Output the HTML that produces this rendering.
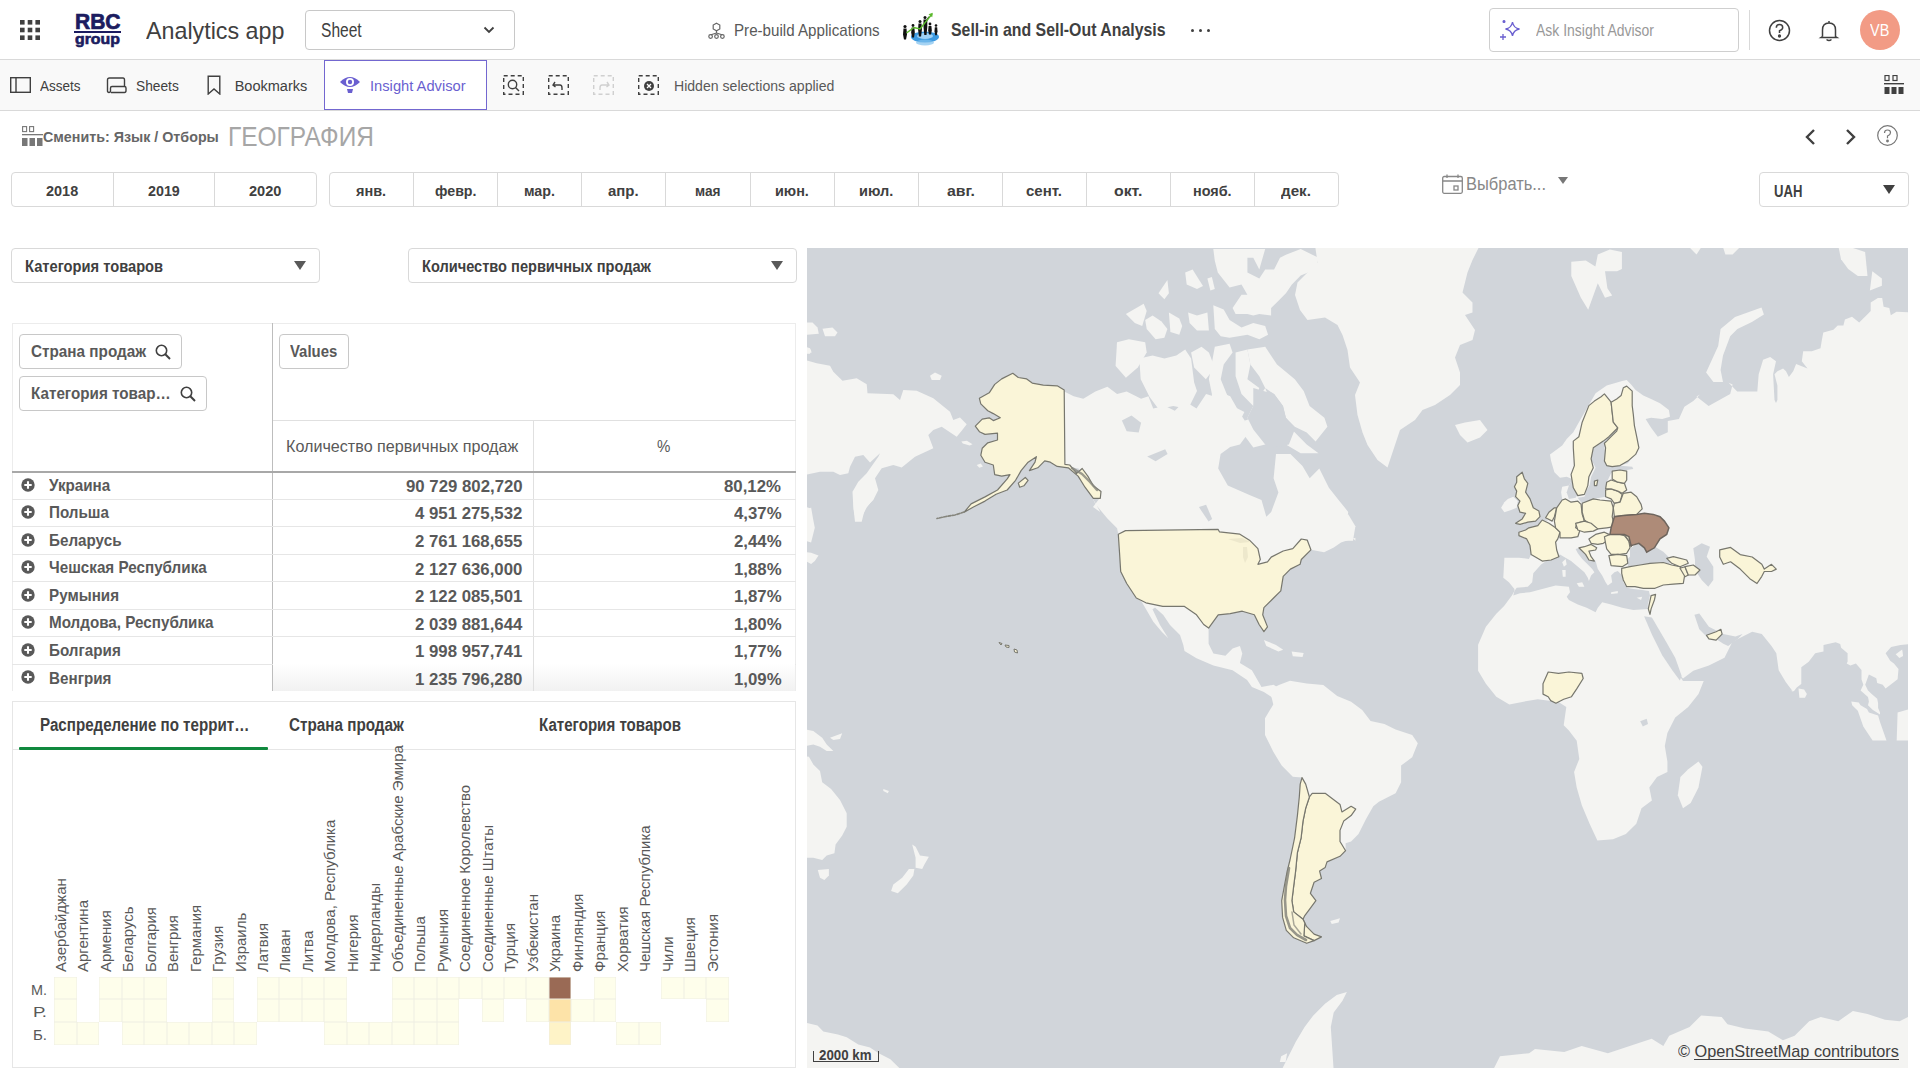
<!DOCTYPE html>
<html><head><meta charset="utf-8">
<style>
*{box-sizing:border-box;margin:0;padding:0}
html,body{width:1920px;height:1080px;overflow:hidden;background:#fff;font-family:"Liberation Sans",sans-serif;color:#404040}
.a{position:absolute;white-space:nowrap;line-height:1}
.b{font-weight:bold}
#hdr{position:absolute;left:0;top:0;width:1920px;height:60px;background:#fff;border-bottom:1px solid #d9d9d9}
#tb{position:absolute;left:0;top:60px;width:1920px;height:51px;background:#f9f9f9;border-bottom:1px solid #d9d9d9}
.box{position:absolute;border:1px solid #d9d9d9;border-radius:4px;background:#fff}
.tri{position:absolute;width:0;height:0;border-left:6px solid transparent;border-right:6px solid transparent;border-top:9px solid #595959}
</style></head><body>
<div id="hdr"></div>
<div id="tb"></div>
<svg class="a" style="left:20px;top:20px" width="20" height="20" viewBox="0 0 20 20" fill="#404040">
<rect x="0" y="0" width="4.6" height="4.6"/><rect x="7.7" y="0" width="4.6" height="4.6"/><rect x="15.4" y="0" width="4.6" height="4.6"/>
<rect x="0" y="7.7" width="4.6" height="4.6"/><rect x="7.7" y="7.7" width="4.6" height="4.6"/><rect x="15.4" y="7.7" width="4.6" height="4.6"/>
<rect x="0" y="15.4" width="4.6" height="4.6"/><rect x="7.7" y="15.4" width="4.6" height="4.6"/><rect x="15.4" y="15.4" width="4.6" height="4.6"/>
</svg>
<div class="a" style="left:75.00px;top:11.04px;font-size:21.80px;font-weight:bold;color:#1c1c60;transform:scaleX(0.9639);transform-origin:0 0;-webkit-text-stroke:0.7px #1c1c60;">RBC</div>
<div class="a" style="left:74px;top:31px;width:47px;height:2.4px;background:#1c1c60"></div>
<div class="a" style="left:75.00px;top:32.04px;font-size:14.24px;font-weight:bold;color:#1c1c60;transform:scaleX(1.1144);transform-origin:0 0;-webkit-text-stroke:0.6px #1c1c60;">group</div>
<div class="a" style="left:145.50px;top:19.48px;font-size:24.71px;color:#404040;transform:scaleX(0.9420);transform-origin:0 0;">Analytics app</div>
<div class="box" style="left:305px;top:10px;width:210px;height:40px;border-color:#c8c8c8"></div>
<div class="a" style="left:321.00px;top:21.11px;font-size:19.48px;color:#404040;transform:scaleX(0.7991);transform-origin:0 0;">Sheet</div>
<svg class="a" style="left:483px;top:26px" width="12" height="8" viewBox="0 0 12 8"><path d="M1.5 1.5 L6 6 L10.5 1.5" stroke="#404040" stroke-width="1.8" fill="none"/></svg>
<svg class="a" style="left:708px;top:22px" width="17" height="17" viewBox="0 0 17 17" fill="none" stroke="#666" stroke-width="1.2">
<path d="M8.5 1.2 L11.8 3.1 L11.8 6.9 L8.5 8.8 L5.2 6.9 L5.2 3.1 Z"/><path d="M8.5 8.8 L8.5 11.5 M8.5 11 L3 12.8 M8.5 11 L14 12.8"/><circle cx="2.6" cy="14.5" r="1.8"/><circle cx="8.5" cy="14.5" r="1.8"/><circle cx="14.4" cy="14.5" r="1.8"/>
</svg>
<div class="a" style="left:734.30px;top:22.20px;font-size:17.01px;color:#595959;transform:scaleX(0.8911);transform-origin:0 0;">Pre-build Applications</div>
<svg class="a" style="left:900px;top:10px" width="42" height="38" viewBox="900 10 42 38">
<ellipse cx="925" cy="37" rx="14" ry="5.5" fill="#3d9ae0"/><ellipse cx="925" cy="36" rx="8" ry="3" fill="#9fd2f7"/><ellipse cx="925" cy="42.5" rx="9" ry="3" fill="#7fc0ee" opacity="0.7"/>
<g fill="#111">
<circle cx="905" cy="26.5" r="1.6"/><path d="M903.5 28.5 h3 l0.5 6 l-1 5 h-2 l-1 -5z"/>
<circle cx="913" cy="25.5" r="1.4"/><path d="M911.6 27.5 h2.8 l0.4 5 l-0.8 5 h-2 l-0.8 -5z"/>
<circle cx="920" cy="21.5" r="1.5"/><path d="M918.5 23.5 h3 l0.4 6 l-0.8 7 h-2.2 l-0.8 -7z"/>
<circle cx="925" cy="17.5" r="1.5"/><path d="M923.5 19.5 h3 l2 -3 l0.8 0.5 l-2 4 l0 6 l-0.8 8 h-2.2 l-0.8 -8z"/>
<circle cx="930" cy="24" r="1.4"/><path d="M928.6 26 h2.8 l0.4 4.5 l-0.8 4 h-2 l-0.8 -4z"/>
<circle cx="936" cy="25.5" r="1.3"/><path d="M934.8 27.3 h2.4 l0.3 4 l-0.7 4 h-1.6 l-0.7 -4z"/>
</g>
<path d="M906.5 33 L914 27.5 L920 29 L932 14" stroke="#5cb82e" stroke-width="1.5" fill="none"/><path d="M928.5 14.2 L932.8 12.8 L932.2 17.2 Z" fill="#5cb82e"/>
</svg>
<div class="a" style="left:951.40px;top:22.01px;font-size:17.59px;font-weight:bold;color:#404040;transform:scaleX(0.9025);transform-origin:0 0;">Sell-in and Sell-Out Analysis</div>
<div class="a" style="left:1190.8px;top:28.6px;width:3px;height:3px;background:#404040;border-radius:2px"></div>
<div class="a" style="left:1198.8px;top:28.6px;width:3px;height:3px;background:#404040;border-radius:2px"></div>
<div class="a" style="left:1206.8px;top:28.6px;width:3px;height:3px;background:#404040;border-radius:2px"></div>
<div class="box" style="left:1489px;top:8px;width:250px;height:44px;border-color:#cfcfcf"></div>
<svg class="a" style="left:1499px;top:19px" width="24" height="22" viewBox="0 0 24 22" fill="none" stroke="#6a5fd0" stroke-width="1.3">
<path d="M13.5 3 Q14.5 9 20.5 10 Q14.5 11 13.5 17 Q12.5 11 6.5 10 Q12.5 9 13.5 3 Z"/><path d="M4 15 L4 21 M1 18 L7 18"/><circle cx="5" cy="2.5" r="0.9" fill="#6a5fd0"/>
</svg>
<div class="a" style="left:1536.00px;top:23.37px;font-size:15.99px;color:#999999;transform:scaleX(0.8734);transform-origin:0 0;">Ask Insight Advisor</div>
<div class="a" style="left:1749px;top:10px;width:1px;height:40px;background:#d9d9d9"></div>
<svg class="a" style="left:1768px;top:19px" width="23" height="23" viewBox="0 0 23 23" fill="none" stroke="#404040" stroke-width="1.5">
<circle cx="11.5" cy="11.5" r="10"/><path d="M8.3 8.7 Q8.3 5.6 11.5 5.6 Q14.7 5.6 14.7 8.5 Q14.7 10.5 11.5 11.8 L11.5 14"/><circle cx="11.5" cy="17" r="0.9" fill="#404040"/>
</svg>
<svg class="a" style="left:1818px;top:19px" width="22" height="23" viewBox="0 0 22 23" fill="none" stroke="#404040" stroke-width="1.5">
<path d="M11 2 L11 3.5 M4.5 17.5 L4.5 11 Q4.5 4 11 4 Q17.5 4 17.5 11 L17.5 17.5 L19 18.5 L3 18.5 L4.5 17.5 M8.5 20.5 Q11 22.5 13.5 20.5"/>
</svg>
<div class="a" style="left:1860px;top:10px;width:40px;height:40px;border-radius:20px;background:#f29b85"></div>
<div class="a" style="left:1870.00px;top:22.30px;font-size:16.42px;color:#ffffff;transform:scaleX(0.8802);transform-origin:0 0;">VB</div>
<svg class="a" style="left:10px;top:77px" width="21" height="16" viewBox="0 0 21 16" fill="none" stroke="#404040" stroke-width="1.4"><rect x="0.7" y="0.7" width="19.6" height="14.6"/><path d="M6 0.7 L6 15.3"/></svg>
<div class="a" style="left:40.00px;top:78.60px;font-size:14.53px;color:#404040;transform:scaleX(0.9288);transform-origin:0 0;">Assets</div>
<svg class="a" style="left:106px;top:77px" width="21" height="17" viewBox="0 0 21 17" fill="none" stroke="#404040" stroke-width="1.4"><path d="M1.5 14 L1.5 3 Q1.5 1 3.5 1 L17 1 Q18.5 1 18.5 3 L18.5 9"/><path d="M5 15.5 L18.5 15.5 Q20 15.5 20 13.5 L20 11 Q20 9.5 18.5 9.5 L6 9.5 Q4.5 9.5 4.5 11 L4.5 14 Q4.5 15.5 3 15.5 Q1.5 15.5 1.5 14"/></svg>
<div class="a" style="left:136.30px;top:78.60px;font-size:14.53px;color:#404040;transform:scaleX(0.9475);transform-origin:0 0;">Sheets</div>
<svg class="a" style="left:207px;top:75px" width="14" height="20" viewBox="0 0 14 20" fill="none" stroke="#404040" stroke-width="1.4"><path d="M1.2 19 L1.2 1.2 L12.8 1.2 L12.8 19 L7 14 Z"/></svg>
<div class="a" style="left:234.70px;top:78.60px;font-size:14.53px;color:#404040;">Bookmarks</div>
<div class="a" style="left:324px;top:60px;width:163px;height:50px;border:1.6px solid #7367d0;background:#fff"></div>
<svg class="a" style="left:339px;top:74px" width="22" height="22" viewBox="0 0 22 22"><path d="M1 8 Q11 -2 21 8 Q11 18 1 8 Z" fill="#6a5fd0"/><circle cx="11" cy="8" r="4" fill="#fff"/><circle cx="11" cy="8" r="2.2" fill="#6a5fd0"/><path d="M8 15 L14 15 L13 19 L9 19 Z" fill="#6a5fd0"/></svg>
<div class="a" style="left:370.00px;top:78.18px;font-size:15.26px;color:#6a5fd0;transform:scaleX(0.9640);transform-origin:0 0;">Insight Advisor</div>
<svg class="a" style="left:503px;top:75px" width="21" height="20" viewBox="0 0 21 20" fill="none" stroke="#404040" stroke-width="1.4"><rect x="0.7" y="0.7" width="19.6" height="18.6" stroke-dasharray="4 3"/><circle cx="9.5" cy="9.5" r="4.2"/><path d="M12.5 12.5 L16 16"/></svg>
<svg class="a" style="left:548px;top:75px" width="21" height="20" viewBox="0 0 21 20" fill="none" stroke="#404040" stroke-width="1.4"><rect x="0.7" y="0.7" width="19.6" height="18.6" stroke-dasharray="4 3"/><path d="M7 7 L5 10 L7.5 12 M5 10 L12 10 Q14 10 14 13 L14 15"/></svg>
<svg class="a" style="left:593px;top:75px" width="21" height="20" viewBox="0 0 21 20" fill="none" stroke="#d0d0d0" stroke-width="1.4"><rect x="0.7" y="0.7" width="19.6" height="18.6" stroke-dasharray="4 3"/><path d="M14 7 L16 10 L13.5 12 M16 10 L9 10 Q7 10 7 13 L7 15"/></svg>
<svg class="a" style="left:638px;top:75px" width="21" height="20" viewBox="0 0 21 20" fill="none" stroke="#404040" stroke-width="1.4"><rect x="0.7" y="0.7" width="19.6" height="18.6" stroke-dasharray="4 3"/><circle cx="11" cy="11" r="5" fill="#404040" stroke="none"/><path d="M9 9 L13 13 M13 9 L9 13" stroke="#fff" stroke-width="1.3"/></svg>
<div class="a" style="left:673.50px;top:78.18px;font-size:15.26px;color:#595959;transform:scaleX(0.9229);transform-origin:0 0;">Hidden selections applied</div>
<svg class="a" style="left:1884px;top:75px" width="22" height="21" viewBox="0 0 22 21" fill="#404040"><rect x="1" y="0.5" width="4" height="5" fill="none" stroke="#404040" stroke-width="1.2"/><rect x="9" y="0.5" width="4" height="5" fill="none" stroke="#404040" stroke-width="1.2"/><rect x="0" y="8" width="20" height="1.4"/><rect x="0.5" y="12" width="5" height="7"/><rect x="7.5" y="12" width="5" height="7"/><rect x="14.5" y="12" width="5" height="7"/></svg>
<svg class="a" style="left:22px;top:126px" width="21" height="20" viewBox="0 0 21 20" fill="#777"><rect x="0.6" y="0.6" width="4" height="5" fill="none" stroke="#777" stroke-width="1.1"/><rect x="7.6" y="0.6" width="4" height="5" fill="none" stroke="#777" stroke-width="1.1"/><rect x="0" y="8" width="21" height="1.3"/><rect x="0" y="12" width="5.5" height="8"/><rect x="7.5" y="12" width="5.5" height="8"/><rect x="15" y="12" width="5.5" height="8"/></svg>
<div class="a" style="left:43.00px;top:130.30px;font-size:14.53px;font-weight:bold;color:#666666;transform:scaleX(0.9833);transform-origin:0 0;">Сменить: Язык / Отборы</div>
<div class="a" style="left:228.00px;top:123.96px;font-size:26.74px;color:#a6a6a6;transform:scaleX(0.9152);transform-origin:0 0;">ГЕОГРАФИЯ</div>
<svg class="a" style="left:1803px;top:128px" width="60" height="18" viewBox="0 0 60 18" fill="none" stroke="#404040" stroke-width="2.4"><path d="M11 2 L4 9 L11 16"/><path d="M44 2 L51 9 L44 16"/></svg>
<svg class="a" style="left:1876px;top:124px" width="23" height="23" viewBox="0 0 23 23" fill="none" stroke="#777" stroke-width="1.2"><circle cx="11.5" cy="11.5" r="9.8"/><path d="M8.5 9 Q8.5 6 11.5 6 Q14.5 6 14.5 8.7 Q14.5 10.6 11.5 12 L11.5 14.3"/><circle cx="11.5" cy="17" r="0.8" fill="#777"/></svg>
<div class="box" style="left:11px;top:172px;width:306px;height:35px"></div>
<div class="a" style="left:45.70px;top:184.47px;font-size:14.68px;font-weight:bold;color:#404040;transform:scaleX(0.9858);transform-origin:0 0;">2018</div>
<div class="a" style="left:112.7px;top:173px;width:1px;height:33px;background:#d9d9d9"></div>
<div class="a" style="left:147.90px;top:184.47px;font-size:14.68px;font-weight:bold;color:#404040;transform:scaleX(0.9736);transform-origin:0 0;">2019</div>
<div class="a" style="left:214.4px;top:173px;width:1px;height:33px;background:#d9d9d9"></div>
<div class="a" style="left:249.20px;top:184.47px;font-size:14.68px;font-weight:bold;color:#404040;transform:scaleX(0.9919);transform-origin:0 0;">2020</div>
<div class="box" style="left:329px;top:172px;width:1010px;height:35px"></div>
<div class="a" style="left:356.27px;top:184.06px;font-size:14.70px;font-weight:bold;color:#404040;transform:scaleX(0.9853);transform-origin:0 0;">янв.</div>
<div class="a" style="left:413.1px;top:173px;width:1px;height:33px;background:#d9d9d9"></div>
<div class="a" style="left:434.60px;top:184.06px;font-size:14.70px;font-weight:bold;color:#404040;transform:scaleX(0.9668);transform-origin:0 0;">февр.</div>
<div class="a" style="left:497.2px;top:173px;width:1px;height:33px;background:#d9d9d9"></div>
<div class="a" style="left:523.90px;top:184.06px;font-size:14.70px;font-weight:bold;color:#404040;transform:scaleX(0.9718);transform-origin:0 0;">мар.</div>
<div class="a" style="left:581.3px;top:173px;width:1px;height:33px;background:#d9d9d9"></div>
<div class="a" style="left:608.00px;top:184.06px;font-size:14.70px;font-weight:bold;color:#404040;transform:scaleX(1.0187);transform-origin:0 0;">апр.</div>
<div class="a" style="left:665.4px;top:173px;width:1px;height:33px;background:#d9d9d9"></div>
<div class="a" style="left:694.70px;top:184.06px;font-size:14.70px;font-weight:bold;color:#404040;transform:scaleX(0.9300);transform-origin:0 0;">мая</div>
<div class="a" style="left:749.5px;top:173px;width:1px;height:33px;background:#d9d9d9"></div>
<div class="a" style="left:774.70px;top:184.06px;font-size:14.70px;font-weight:bold;color:#404040;transform:scaleX(0.9813);transform-origin:0 0;">июн.</div>
<div class="a" style="left:833.6px;top:173px;width:1px;height:33px;background:#d9d9d9"></div>
<div class="a" style="left:858.60px;top:184.06px;font-size:14.70px;font-weight:bold;color:#404040;transform:scaleX(0.9879);transform-origin:0 0;">июл.</div>
<div class="a" style="left:917.7px;top:173px;width:1px;height:33px;background:#d9d9d9"></div>
<div class="a" style="left:947.20px;top:184.06px;font-size:14.70px;font-weight:bold;color:#404040;transform:scaleX(1.0792);transform-origin:0 0;">авг.</div>
<div class="a" style="left:1001.8px;top:173px;width:1px;height:33px;background:#d9d9d9"></div>
<div class="a" style="left:1025.60px;top:184.06px;font-size:14.70px;font-weight:bold;color:#404040;transform:scaleX(1.0225);transform-origin:0 0;">сент.</div>
<div class="a" style="left:1085.9px;top:173px;width:1px;height:33px;background:#d9d9d9"></div>
<div class="a" style="left:1113.80px;top:184.06px;font-size:14.70px;font-weight:bold;color:#404040;transform:scaleX(1.0793);transform-origin:0 0;">окт.</div>
<div class="a" style="left:1170.0px;top:173px;width:1px;height:33px;background:#d9d9d9"></div>
<div class="a" style="left:1192.90px;top:184.06px;font-size:14.70px;font-weight:bold;color:#404040;transform:scaleX(0.9798);transform-origin:0 0;">нояб.</div>
<div class="a" style="left:1254.1px;top:173px;width:1px;height:33px;background:#d9d9d9"></div>
<div class="a" style="left:1280.70px;top:184.06px;font-size:14.70px;font-weight:bold;color:#404040;transform:scaleX(1.0325);transform-origin:0 0;">дек.</div>
<svg class="a" style="left:1442px;top:174px" width="21" height="20" viewBox="0 0 21 20" fill="none" stroke="#888" stroke-width="1.3"><rect x="0.7" y="2.5" width="19.6" height="16.8" rx="1.5"/><path d="M0.7 7 L20.3 7 M5 0.5 L5 4 M16 0.5 L16 4"/><rect x="12" y="12" width="4" height="4"/></svg>
<div class="a" style="left:1466.00px;top:174.71px;font-size:18.90px;color:#888888;transform:scaleX(0.8712);transform-origin:0 0;">Выбрать...</div>
<div class="tri" style="left:1558px;top:177px;border-top-color:#777;border-left-width:5.5px;border-right-width:5.5px;border-top-width:7px"></div>
<div class="box" style="left:1759px;top:172px;width:150px;height:35px"></div>
<div class="a" style="left:1773.80px;top:183.24px;font-size:16.13px;font-weight:bold;color:#404040;transform:scaleX(0.8131);transform-origin:0 0;">UAH</div>
<div class="tri" style="left:1883px;top:185px;border-top-color:#404040"></div>
<div class="box" style="left:11px;top:248px;width:309px;height:35px"></div>
<div class="a" style="left:24.80px;top:258.69px;font-size:15.84px;font-weight:bold;color:#404040;transform:scaleX(0.9275);transform-origin:0 0;">Категория товаров</div>
<div class="tri" style="left:294px;top:261px"></div>
<div class="box" style="left:408px;top:248px;width:389px;height:35px"></div>
<div class="a" style="left:422.20px;top:258.69px;font-size:15.84px;font-weight:bold;color:#404040;transform:scaleX(0.9216);transform-origin:0 0;">Количество первичных продаж</div>
<div class="tri" style="left:771px;top:261px"></div>
<div class="a" style="left:12px;top:323px;width:784px;height:368px;border-top:1px solid #ececec;border-left:1px solid #ececec;border-right:1px solid #ececec"></div>
<div class="a" style="left:272px;top:323px;width:1px;height:368px;background:#bdbdbd"></div>
<div class="a" style="left:273px;top:420px;width:523px;height:1px;background:#e0e0e0"></div>
<div class="a" style="left:533px;top:420px;width:1px;height:271px;background:#e0e0e0"></div>
<div class="a" style="left:12px;top:471px;width:784px;height:2px;background:#a8a8a8"></div>
<svg style="position:absolute;left:0;top:0" width="0" height="0"><defs><symbol id="srch" viewBox="0 0 16 16"><circle cx="6.5" cy="6.5" r="5.2" fill="none" stroke="#404040" stroke-width="1.6"/><path d="M10.3 10.3 L15 15" stroke="#404040" stroke-width="2"/></symbol>
<symbol id="plus" viewBox="0 0 14 14"><circle cx="7" cy="7" r="6.7" fill="#595959"/><path d="M3.3 7 L10.7 7 M7 3.3 L7 10.7" stroke="#fff" stroke-width="2.1"/></symbol></defs></svg>
<div class="box" style="left:19px;top:334px;width:163px;height:35px;border-color:#c8c8c8"></div>
<div class="a" style="left:30.60px;top:343.97px;font-size:15.99px;font-weight:bold;color:#595959;transform:scaleX(0.9564);transform-origin:0 0;">Страна продаж</div>
<svg class="a" style="left:155px;top:344px" width="16" height="16"><use href="#srch"/></svg>
<div class="box" style="left:19px;top:376px;width:188px;height:35px;border-color:#c8c8c8"></div>
<div class="a" style="left:30.60px;top:385.97px;font-size:15.99px;font-weight:bold;color:#595959;transform:scaleX(0.9518);transform-origin:0 0;">Категория товар…</div>
<svg class="a" style="left:180px;top:386px" width="16" height="16"><use href="#srch"/></svg>
<div class="box" style="left:279px;top:334px;width:70px;height:35px;border-color:#c8c8c8"></div>
<div class="a" style="left:290.20px;top:343.87px;font-size:16.57px;font-weight:bold;color:#595959;transform:scaleX(0.9005);transform-origin:0 0;">Values</div>
<div class="a" style="left:286.00px;top:438.75px;font-size:16.72px;color:#595959;transform:scaleX(0.9656);transform-origin:0 0;">Количество первичных продаж</div>
<div class="a" style="left:657.31px;top:438.75px;font-size:16.72px;color:#595959;transform:scaleX(0.9000);transform-origin:0 0;">%</div>
<svg class="a" style="left:20.5px;top:477.5px" width="14" height="14"><use href="#plus"/></svg>
<div class="a" style="left:48.60px;top:476.70px;font-size:17.01px;font-weight:bold;color:#595959;transform:scaleX(0.8948);transform-origin:0 0;">Украина</div>
<div class="a" style="left:406.00px;top:477.94px;font-size:16.13px;font-weight:bold;color:#595959;transform:scaleX(1.0417);transform-origin:0 0;">90 729 802,720</div>
<div class="a" style="left:724.23px;top:477.94px;font-size:16.13px;font-weight:bold;color:#595959;transform:scaleX(1.0417);transform-origin:0 0;">80,12%</div>
<div class="a" style="left:12px;top:498.6px;width:784px;height:1px;background:#e6e6e6"></div>
<svg class="a" style="left:20.5px;top:505.1px" width="14" height="14"><use href="#plus"/></svg>
<div class="a" style="left:48.60px;top:504.25px;font-size:17.01px;font-weight:bold;color:#595959;transform:scaleX(0.8948);transform-origin:0 0;">Польша</div>
<div class="a" style="left:415.33px;top:505.49px;font-size:16.13px;font-weight:bold;color:#595959;transform:scaleX(1.0417);transform-origin:0 0;">4 951 275,532</div>
<div class="a" style="left:733.56px;top:505.49px;font-size:16.13px;font-weight:bold;color:#595959;transform:scaleX(1.0417);transform-origin:0 0;">4,37%</div>
<div class="a" style="left:12px;top:526.1px;width:784px;height:1px;background:#e6e6e6"></div>
<svg class="a" style="left:20.5px;top:532.6px" width="14" height="14"><use href="#plus"/></svg>
<div class="a" style="left:48.60px;top:531.80px;font-size:17.01px;font-weight:bold;color:#595959;transform:scaleX(0.8948);transform-origin:0 0;">Беларусь</div>
<div class="a" style="left:415.33px;top:533.04px;font-size:16.13px;font-weight:bold;color:#595959;transform:scaleX(1.0417);transform-origin:0 0;">2 761 168,655</div>
<div class="a" style="left:733.56px;top:533.04px;font-size:16.13px;font-weight:bold;color:#595959;transform:scaleX(1.0417);transform-origin:0 0;">2,44%</div>
<div class="a" style="left:12px;top:553.6px;width:784px;height:1px;background:#e6e6e6"></div>
<svg class="a" style="left:20.5px;top:560.1px" width="14" height="14"><use href="#plus"/></svg>
<div class="a" style="left:48.60px;top:559.35px;font-size:17.01px;font-weight:bold;color:#595959;transform:scaleX(0.8948);transform-origin:0 0;">Чешская Республика</div>
<div class="a" style="left:415.33px;top:560.59px;font-size:16.13px;font-weight:bold;color:#595959;transform:scaleX(1.0417);transform-origin:0 0;">2 127 636,000</div>
<div class="a" style="left:733.56px;top:560.59px;font-size:16.13px;font-weight:bold;color:#595959;transform:scaleX(1.0417);transform-origin:0 0;">1,88%</div>
<div class="a" style="left:12px;top:581.2px;width:784px;height:1px;background:#e6e6e6"></div>
<svg class="a" style="left:20.5px;top:587.7px" width="14" height="14"><use href="#plus"/></svg>
<div class="a" style="left:48.60px;top:586.90px;font-size:17.01px;font-weight:bold;color:#595959;transform:scaleX(0.8948);transform-origin:0 0;">Румыния</div>
<div class="a" style="left:415.33px;top:588.14px;font-size:16.13px;font-weight:bold;color:#595959;transform:scaleX(1.0417);transform-origin:0 0;">2 122 085,501</div>
<div class="a" style="left:733.56px;top:588.14px;font-size:16.13px;font-weight:bold;color:#595959;transform:scaleX(1.0417);transform-origin:0 0;">1,87%</div>
<div class="a" style="left:12px;top:608.8px;width:784px;height:1px;background:#e6e6e6"></div>
<svg class="a" style="left:20.5px;top:615.2px" width="14" height="14"><use href="#plus"/></svg>
<div class="a" style="left:48.60px;top:614.45px;font-size:17.01px;font-weight:bold;color:#595959;transform:scaleX(0.8948);transform-origin:0 0;">Молдова, Республика</div>
<div class="a" style="left:415.33px;top:615.69px;font-size:16.13px;font-weight:bold;color:#595959;transform:scaleX(1.0417);transform-origin:0 0;">2 039 881,644</div>
<div class="a" style="left:733.56px;top:615.69px;font-size:16.13px;font-weight:bold;color:#595959;transform:scaleX(1.0417);transform-origin:0 0;">1,80%</div>
<div class="a" style="left:12px;top:636.3px;width:784px;height:1px;background:#e6e6e6"></div>
<svg class="a" style="left:20.5px;top:642.8px" width="14" height="14"><use href="#plus"/></svg>
<div class="a" style="left:48.60px;top:642.00px;font-size:17.01px;font-weight:bold;color:#595959;transform:scaleX(0.8948);transform-origin:0 0;">Болгария</div>
<div class="a" style="left:415.33px;top:643.24px;font-size:16.13px;font-weight:bold;color:#595959;transform:scaleX(1.0417);transform-origin:0 0;">1 998 957,741</div>
<div class="a" style="left:733.56px;top:643.24px;font-size:16.13px;font-weight:bold;color:#595959;transform:scaleX(1.0417);transform-origin:0 0;">1,77%</div>
<div class="a" style="left:12px;top:663.9px;width:784px;height:1px;background:#e6e6e6"></div>
<div class="a" style="left:273px;top:664px;width:522px;height:27px;background:linear-gradient(#fff,#f1f1f1)"></div>
<div class="a" style="left:533px;top:664px;width:1px;height:27px;background:#e0e0e0"></div>
<svg class="a" style="left:20.5px;top:670.4px" width="14" height="14"><use href="#plus"/></svg>
<div class="a" style="left:48.60px;top:669.55px;font-size:17.01px;font-weight:bold;color:#595959;transform:scaleX(0.8948);transform-origin:0 0;">Венгрия</div>
<div class="a" style="left:415.33px;top:670.79px;font-size:16.13px;font-weight:bold;color:#595959;transform:scaleX(1.0417);transform-origin:0 0;">1 235 796,280</div>
<div class="a" style="left:733.56px;top:670.79px;font-size:16.13px;font-weight:bold;color:#595959;transform:scaleX(1.0417);transform-origin:0 0;">1,09%</div>
<div class="a" style="left:12px;top:701px;width:784px;height:367px;border:1px solid #e6e6e6"></div>
<div class="a" style="left:13px;top:749px;width:782px;height:1px;background:#e6e6e6"></div>
<div class="a" style="left:18.5px;top:746.5px;width:249px;height:3px;background:#10893e;border-radius:1px"></div>
<div class="a" style="left:39.60px;top:717.39px;font-size:17.44px;font-weight:bold;color:#404040;transform:scaleX(0.8684);transform-origin:0 0;">Распределение по террит…</div>
<div class="a" style="left:289.00px;top:717.39px;font-size:17.44px;font-weight:bold;color:#404040;transform:scaleX(0.8744);transform-origin:0 0;">Страна продаж</div>
<div class="a" style="left:539.00px;top:717.39px;font-size:17.44px;font-weight:bold;color:#404040;transform:scaleX(0.8656);transform-origin:0 0;">Категория товаров</div>
<div class="a" style="left:31.00px;top:982.18px;font-size:15.26px;color:#595959;transform:scaleX(0.9445);transform-origin:0 0;">М.</div>
<div class="a" style="left:54.40px;top:976.50px;width:22.48px;height:22.90px;background:#fefeeb;box-shadow:inset 0 0 0 0.5px #eeeee4"></div>
<div class="a" style="left:99.36px;top:976.50px;width:22.48px;height:22.90px;background:#fefeeb;box-shadow:inset 0 0 0 0.5px #eeeee4"></div>
<div class="a" style="left:121.84px;top:976.50px;width:22.48px;height:22.90px;background:#fefeeb;box-shadow:inset 0 0 0 0.5px #eeeee4"></div>
<div class="a" style="left:144.32px;top:976.50px;width:22.48px;height:22.90px;background:#fefeeb;box-shadow:inset 0 0 0 0.5px #eeeee4"></div>
<div class="a" style="left:211.76px;top:976.50px;width:22.48px;height:22.90px;background:#fefeeb;box-shadow:inset 0 0 0 0.5px #eeeee4"></div>
<div class="a" style="left:256.72px;top:976.50px;width:22.48px;height:22.90px;background:#fefeeb;box-shadow:inset 0 0 0 0.5px #eeeee4"></div>
<div class="a" style="left:279.20px;top:976.50px;width:22.48px;height:22.90px;background:#fefeeb;box-shadow:inset 0 0 0 0.5px #eeeee4"></div>
<div class="a" style="left:301.68px;top:976.50px;width:22.48px;height:22.90px;background:#fefeeb;box-shadow:inset 0 0 0 0.5px #eeeee4"></div>
<div class="a" style="left:324.16px;top:976.50px;width:22.48px;height:22.90px;background:#fefeeb;box-shadow:inset 0 0 0 0.5px #eeeee4"></div>
<div class="a" style="left:391.60px;top:976.50px;width:22.48px;height:22.90px;background:#fefeeb;box-shadow:inset 0 0 0 0.5px #eeeee4"></div>
<div class="a" style="left:414.08px;top:976.50px;width:22.48px;height:22.90px;background:#fefeeb;box-shadow:inset 0 0 0 0.5px #eeeee4"></div>
<div class="a" style="left:436.56px;top:976.50px;width:22.48px;height:22.90px;background:#fefeeb;box-shadow:inset 0 0 0 0.5px #eeeee4"></div>
<div class="a" style="left:459.04px;top:976.50px;width:22.48px;height:22.90px;background:#fefeeb;box-shadow:inset 0 0 0 0.5px #eeeee4"></div>
<div class="a" style="left:481.52px;top:976.50px;width:22.48px;height:22.90px;background:#fefeeb;box-shadow:inset 0 0 0 0.5px #eeeee4"></div>
<div class="a" style="left:504.00px;top:976.50px;width:22.48px;height:22.90px;background:#fefeeb;box-shadow:inset 0 0 0 0.5px #eeeee4"></div>
<div class="a" style="left:526.48px;top:976.50px;width:22.48px;height:22.90px;background:#fefeeb;box-shadow:inset 0 0 0 0.5px #eeeee4"></div>
<div class="a" style="left:548.96px;top:976.50px;width:22.48px;height:22.90px;background:#9a6a55;box-shadow:inset 0 0 0 0.5px #eeeee4"></div>
<div class="a" style="left:593.92px;top:976.50px;width:22.48px;height:22.90px;background:#fefeeb;box-shadow:inset 0 0 0 0.5px #eeeee4"></div>
<div class="a" style="left:661.36px;top:976.50px;width:22.48px;height:22.90px;background:#fefeeb;box-shadow:inset 0 0 0 0.5px #eeeee4"></div>
<div class="a" style="left:683.84px;top:976.50px;width:22.48px;height:22.90px;background:#fefeeb;box-shadow:inset 0 0 0 0.5px #eeeee4"></div>
<div class="a" style="left:706.32px;top:976.50px;width:22.48px;height:22.90px;background:#fefeeb;box-shadow:inset 0 0 0 0.5px #eeeee4"></div>
<div class="a" style="left:33.00px;top:1003.98px;font-size:15.26px;color:#595959;transform:scaleX(1.2150);transform-origin:0 0;">Р.</div>
<div class="a" style="left:54.40px;top:999.40px;width:22.48px;height:22.30px;background:#fefeeb;box-shadow:inset 0 0 0 0.5px #eeeee4"></div>
<div class="a" style="left:99.36px;top:999.40px;width:22.48px;height:22.30px;background:#fefeeb;box-shadow:inset 0 0 0 0.5px #eeeee4"></div>
<div class="a" style="left:121.84px;top:999.40px;width:22.48px;height:22.30px;background:#fefeeb;box-shadow:inset 0 0 0 0.5px #eeeee4"></div>
<div class="a" style="left:144.32px;top:999.40px;width:22.48px;height:22.30px;background:#fefeeb;box-shadow:inset 0 0 0 0.5px #eeeee4"></div>
<div class="a" style="left:211.76px;top:999.40px;width:22.48px;height:22.30px;background:#fefeeb;box-shadow:inset 0 0 0 0.5px #eeeee4"></div>
<div class="a" style="left:256.72px;top:999.40px;width:22.48px;height:22.30px;background:#fefeeb;box-shadow:inset 0 0 0 0.5px #eeeee4"></div>
<div class="a" style="left:279.20px;top:999.40px;width:22.48px;height:22.30px;background:#fefeeb;box-shadow:inset 0 0 0 0.5px #eeeee4"></div>
<div class="a" style="left:301.68px;top:999.40px;width:22.48px;height:22.30px;background:#fefeeb;box-shadow:inset 0 0 0 0.5px #eeeee4"></div>
<div class="a" style="left:324.16px;top:999.40px;width:22.48px;height:22.30px;background:#fefeeb;box-shadow:inset 0 0 0 0.5px #eeeee4"></div>
<div class="a" style="left:391.60px;top:999.40px;width:22.48px;height:22.30px;background:#fefeeb;box-shadow:inset 0 0 0 0.5px #eeeee4"></div>
<div class="a" style="left:414.08px;top:999.40px;width:22.48px;height:22.30px;background:#fefeeb;box-shadow:inset 0 0 0 0.5px #eeeee4"></div>
<div class="a" style="left:436.56px;top:999.40px;width:22.48px;height:22.30px;background:#fefeeb;box-shadow:inset 0 0 0 0.5px #eeeee4"></div>
<div class="a" style="left:481.52px;top:999.40px;width:22.48px;height:22.30px;background:#fefeeb;box-shadow:inset 0 0 0 0.5px #eeeee4"></div>
<div class="a" style="left:526.48px;top:999.40px;width:22.48px;height:22.30px;background:#fefeeb;box-shadow:inset 0 0 0 0.5px #eeeee4"></div>
<div class="a" style="left:548.96px;top:999.40px;width:22.48px;height:22.30px;background:#fde3a8;box-shadow:inset 0 0 0 0.5px #eeeee4"></div>
<div class="a" style="left:571.44px;top:999.40px;width:22.48px;height:22.30px;background:#fefeeb;box-shadow:inset 0 0 0 0.5px #eeeee4"></div>
<div class="a" style="left:593.92px;top:999.40px;width:22.48px;height:22.30px;background:#fefeeb;box-shadow:inset 0 0 0 0.5px #eeeee4"></div>
<div class="a" style="left:706.32px;top:999.40px;width:22.48px;height:22.30px;background:#fefeeb;box-shadow:inset 0 0 0 0.5px #eeeee4"></div>
<div class="a" style="left:33.00px;top:1026.98px;font-size:15.26px;color:#595959;transform:scaleX(0.9811);transform-origin:0 0;">Б.</div>
<div class="a" style="left:54.40px;top:1021.70px;width:22.48px;height:22.90px;background:#fefeeb;box-shadow:inset 0 0 0 0.5px #eeeee4"></div>
<div class="a" style="left:76.88px;top:1021.70px;width:22.48px;height:22.90px;background:#fefeeb;box-shadow:inset 0 0 0 0.5px #eeeee4"></div>
<div class="a" style="left:121.84px;top:1021.70px;width:22.48px;height:22.90px;background:#fefeeb;box-shadow:inset 0 0 0 0.5px #eeeee4"></div>
<div class="a" style="left:144.32px;top:1021.70px;width:22.48px;height:22.90px;background:#fefeeb;box-shadow:inset 0 0 0 0.5px #eeeee4"></div>
<div class="a" style="left:166.80px;top:1021.70px;width:22.48px;height:22.90px;background:#fefeeb;box-shadow:inset 0 0 0 0.5px #eeeee4"></div>
<div class="a" style="left:189.28px;top:1021.70px;width:22.48px;height:22.90px;background:#fefeeb;box-shadow:inset 0 0 0 0.5px #eeeee4"></div>
<div class="a" style="left:211.76px;top:1021.70px;width:22.48px;height:22.90px;background:#fefeeb;box-shadow:inset 0 0 0 0.5px #eeeee4"></div>
<div class="a" style="left:234.24px;top:1021.70px;width:22.48px;height:22.90px;background:#fefeeb;box-shadow:inset 0 0 0 0.5px #eeeee4"></div>
<div class="a" style="left:324.16px;top:1021.70px;width:22.48px;height:22.90px;background:#fefeeb;box-shadow:inset 0 0 0 0.5px #eeeee4"></div>
<div class="a" style="left:346.64px;top:1021.70px;width:22.48px;height:22.90px;background:#fefeeb;box-shadow:inset 0 0 0 0.5px #eeeee4"></div>
<div class="a" style="left:369.12px;top:1021.70px;width:22.48px;height:22.90px;background:#fefeeb;box-shadow:inset 0 0 0 0.5px #eeeee4"></div>
<div class="a" style="left:391.60px;top:1021.70px;width:22.48px;height:22.90px;background:#fefeeb;box-shadow:inset 0 0 0 0.5px #eeeee4"></div>
<div class="a" style="left:414.08px;top:1021.70px;width:22.48px;height:22.90px;background:#fefeeb;box-shadow:inset 0 0 0 0.5px #eeeee4"></div>
<div class="a" style="left:436.56px;top:1021.70px;width:22.48px;height:22.90px;background:#fefeeb;box-shadow:inset 0 0 0 0.5px #eeeee4"></div>
<div class="a" style="left:548.96px;top:1021.70px;width:22.48px;height:22.90px;background:#fef3c7;box-shadow:inset 0 0 0 0.5px #eeeee4"></div>
<div class="a" style="left:616.40px;top:1021.70px;width:22.48px;height:22.90px;background:#fefeeb;box-shadow:inset 0 0 0 0.5px #eeeee4"></div>
<div class="a" style="left:638.88px;top:1021.70px;width:22.48px;height:22.90px;background:#fefeeb;box-shadow:inset 0 0 0 0.5px #eeeee4"></div>
<div class="a" style="left:65.6px;top:972px;font-size:15px;color:#595959;transform-origin:0 0;transform:rotate(-90deg) translate(0,-13.5px)">Азербайджан</div>
<div class="a" style="left:88.1px;top:972px;font-size:15px;color:#595959;transform-origin:0 0;transform:rotate(-90deg) translate(0,-13.5px)">Аргентина</div>
<div class="a" style="left:110.6px;top:972px;font-size:15px;color:#595959;transform-origin:0 0;transform:rotate(-90deg) translate(0,-13.5px)">Армения</div>
<div class="a" style="left:133.1px;top:972px;font-size:15px;color:#595959;transform-origin:0 0;transform:rotate(-90deg) translate(0,-13.5px)">Беларусь</div>
<div class="a" style="left:155.6px;top:972px;font-size:15px;color:#595959;transform-origin:0 0;transform:rotate(-90deg) translate(0,-13.5px)">Болгария</div>
<div class="a" style="left:178.0px;top:972px;font-size:15px;color:#595959;transform-origin:0 0;transform:rotate(-90deg) translate(0,-13.5px)">Венгрия</div>
<div class="a" style="left:200.5px;top:972px;font-size:15px;color:#595959;transform-origin:0 0;transform:rotate(-90deg) translate(0,-13.5px)">Германия</div>
<div class="a" style="left:223.0px;top:972px;font-size:15px;color:#595959;transform-origin:0 0;transform:rotate(-90deg) translate(0,-13.5px)">Грузия</div>
<div class="a" style="left:245.5px;top:972px;font-size:15px;color:#595959;transform-origin:0 0;transform:rotate(-90deg) translate(0,-13.5px)">Израиль</div>
<div class="a" style="left:268.0px;top:972px;font-size:15px;color:#595959;transform-origin:0 0;transform:rotate(-90deg) translate(0,-13.5px)">Латвия</div>
<div class="a" style="left:290.4px;top:972px;font-size:15px;color:#595959;transform-origin:0 0;transform:rotate(-90deg) translate(0,-13.5px)">Ливан</div>
<div class="a" style="left:312.9px;top:972px;font-size:15px;color:#595959;transform-origin:0 0;transform:rotate(-90deg) translate(0,-13.5px)">Литва</div>
<div class="a" style="left:335.4px;top:972px;font-size:15px;color:#595959;transform-origin:0 0;transform:rotate(-90deg) translate(0,-13.5px)">Молдова, Республика</div>
<div class="a" style="left:357.9px;top:972px;font-size:15px;color:#595959;transform-origin:0 0;transform:rotate(-90deg) translate(0,-13.5px)">Нигерия</div>
<div class="a" style="left:380.4px;top:972px;font-size:15px;color:#595959;transform-origin:0 0;transform:rotate(-90deg) translate(0,-13.5px)">Нидерланды</div>
<div class="a" style="left:402.8px;top:972px;font-size:15px;color:#595959;transform-origin:0 0;transform:rotate(-90deg) translate(0,-13.5px)">Объединенные Арабские Эмира</div>
<div class="a" style="left:425.3px;top:972px;font-size:15px;color:#595959;transform-origin:0 0;transform:rotate(-90deg) translate(0,-13.5px)">Польша</div>
<div class="a" style="left:447.8px;top:972px;font-size:15px;color:#595959;transform-origin:0 0;transform:rotate(-90deg) translate(0,-13.5px)">Румыния</div>
<div class="a" style="left:470.3px;top:972px;font-size:15px;color:#595959;transform-origin:0 0;transform:rotate(-90deg) translate(0,-13.5px)">Соединенное Королевство</div>
<div class="a" style="left:492.8px;top:972px;font-size:15px;color:#595959;transform-origin:0 0;transform:rotate(-90deg) translate(0,-13.5px)">Соединенные Штаты</div>
<div class="a" style="left:515.2px;top:972px;font-size:15px;color:#595959;transform-origin:0 0;transform:rotate(-90deg) translate(0,-13.5px)">Турция</div>
<div class="a" style="left:537.7px;top:972px;font-size:15px;color:#595959;transform-origin:0 0;transform:rotate(-90deg) translate(0,-13.5px)">Узбекистан</div>
<div class="a" style="left:560.2px;top:972px;font-size:15px;color:#595959;transform-origin:0 0;transform:rotate(-90deg) translate(0,-13.5px)">Украина</div>
<div class="a" style="left:582.7px;top:972px;font-size:15px;color:#595959;transform-origin:0 0;transform:rotate(-90deg) translate(0,-13.5px)">Финляндия</div>
<div class="a" style="left:605.2px;top:972px;font-size:15px;color:#595959;transform-origin:0 0;transform:rotate(-90deg) translate(0,-13.5px)">Франция</div>
<div class="a" style="left:627.6px;top:972px;font-size:15px;color:#595959;transform-origin:0 0;transform:rotate(-90deg) translate(0,-13.5px)">Хорватия</div>
<div class="a" style="left:650.1px;top:972px;font-size:15px;color:#595959;transform-origin:0 0;transform:rotate(-90deg) translate(0,-13.5px)">Чешская Республика</div>
<div class="a" style="left:672.6px;top:972px;font-size:15px;color:#595959;transform-origin:0 0;transform:rotate(-90deg) translate(0,-13.5px)">Чили</div>
<div class="a" style="left:695.1px;top:972px;font-size:15px;color:#595959;transform-origin:0 0;transform:rotate(-90deg) translate(0,-13.5px)">Швеция</div>
<div class="a" style="left:717.6px;top:972px;font-size:15px;color:#595959;transform-origin:0 0;transform:rotate(-90deg) translate(0,-13.5px)">Эстония</div>
<svg class="a" style="left:807px;top:248px" width="1101" height="820" viewBox="0 0 1101 820">
<rect width="1101" height="820" fill="#d1d5da"/>
<g fill="#f4f4f2"><path d="M-2.0 112.0 L9.7 115.3 L23.0 117.8 L26.3 123.7 L35.5 132.8 L49.7 130.3 L59.7 136.2 L60.5 145.3 L86.3 146.2 L93.0 152.0 L96.3 142.0 L109.7 142.8 L126.3 150.3 L143.0 163.7 L146.3 172.0 L153.0 169.5 L159.7 176.2 L154.7 182.8 L149.7 188.7 L134.7 178.7 L126.3 182.0 L121.3 187.0 L126.3 200.3 L108.0 208.7 L94.7 219.5 L86.3 217.0 L74.7 220.3 L68.0 230.3 L71.3 242.0 L66.3 252.0 L58.0 260.3 L54.7 273.7 L48.0 273.7 L46.3 258.7 L45.5 243.7 L51.3 233.7 L59.7 225.3 L71.3 208.7 L73.0 205.3 L63.0 214.5 L56.3 207.0 L48.0 208.7 L43.0 218.7 L41.3 225.3 L33.0 227.0 L26.3 223.7 L13.0 223.7 L-2.0 227.0Z"/><path d="M-2.0 258.7 L3.0 260.3 L5.5 273.7 L-2.0 273.7Z"/><path d="M123.0 127.8 L128.0 124.5 L134.7 127.8 L133.0 132.0 L124.7 132.0Z"/><path d="M-2.0 98.7 L3.0 100.3 L4.7 104.5 L-2.0 105.3Z"/><path d="M-2.0 74.5 L5.5 74.5 L10.5 79.5 L11.8 85.8 L-2.0 87.0Z"/><path d="M15.5 80.8 L25.5 79.5 L30.5 84.5 L28.0 88.2 L18.0 88.2Z"/><path d="M-2.0 99.5 L4.2 102.0 L3.0 105.8 L-2.0 105.8Z"/><path d="M406.3 0.9 L458.2 0.9 L452.3 21.6 L446.3 9.8 L440.4 9.8 L440.4 24.6 L452.3 30.5 L458.2 21.6 L467.1 21.6 L473.0 9.8 L478.9 6.8 L493.7 0.9 L511.5 9.8 L508.6 21.6 L493.7 27.6 L484.9 36.4 L478.9 45.3 L470.0 54.2 L464.1 60.1 L464.1 67.6 L452.3 66.1 L446.3 67.6 L440.4 66.1 L428.6 66.1 L425.6 60.1 L434.5 46.8 L440.4 46.8 L434.5 36.4 L422.6 39.4 L410.8 24.6 L407.8 12.7Z"/><path d="M378.2 24.6 L385.6 21.6 L396.0 37.9 L390.0 40.9 L379.7 36.4Z"/><path d="M400.4 30.5 L404.9 29.0 L407.8 40.9 L403.4 42.4Z"/><path d="M351.5 45.3 L360.4 32.0 L361.9 45.3 L357.4 51.3Z"/><path d="M318.9 66.1 L336.7 55.7 L339.7 63.1 L335.2 77.9 L327.8 75.0Z"/><path d="M338.2 72.0 L345.6 67.6 L354.5 73.5 L360.4 80.9 L357.4 89.8 L348.6 91.3 L339.7 80.9Z"/><path d="M361.9 64.6 L372.3 70.5 L375.2 77.9 L372.3 86.8 L363.4 83.9Z"/><path d="M381.1 64.6 L390.0 67.6 L400.4 64.6 L401.9 82.4 L390.0 82.4 L382.6 75.0Z"/><path d="M406.3 57.2 L416.7 61.6 L422.6 72.0 L434.5 79.4 L446.3 75.0 L458.2 77.9 L461.1 86.8 L452.3 91.3 L440.4 86.8 L422.6 89.8 L413.7 88.3 L407.8 80.9Z"/><path d="M310.0 94.2 L321.9 91.3 L338.2 94.2 L339.7 104.6 L330.8 119.4 L318.9 129.8 L308.6 117.9Z"/><path d="M332.3 110.5 L345.6 107.6 L357.4 110.5 L369.3 107.6 L378.2 101.6 L384.1 110.5 L387.1 134.2 L390.0 143.1 L381.1 160.9 L366.3 157.9 L351.5 160.9 L342.6 149.0 L333.7 131.3Z"/><path d="M384.1 104.6 L394.5 98.7 L401.9 104.6 L407.8 119.4 L398.9 131.3 L387.1 119.4Z"/><path d="M407.8 98.7 L422.6 95.7 L425.6 104.6 L416.7 116.4 L413.7 131.3 L419.7 146.1 L425.6 157.9 L437.4 163.9 L434.5 169.8 L404.9 169.8 L404.9 146.1 L401.9 131.3Z"/><path d="M428.6 104.6 L440.4 101.6 L443.4 116.4 L440.4 131.3 L452.3 140.1 L446.3 157.9 L434.5 146.1 L428.6 128.3Z"/><path d="M440.4 101.6 L458.2 98.7 L470.0 116.4 L487.8 131.3 L496.7 143.1 L502.6 157.9 L517.4 169.8 L520.4 178.7 L508.6 193.5 L499.7 184.6 L487.8 178.7 L478.9 169.8 L476.0 157.9 L467.1 146.1 L458.2 140.1 L452.3 128.3 L443.4 116.4Z"/><path d="M470.0 169.8 L484.9 181.6 L499.7 196.4 L511.5 205.3 L493.7 205.3 L478.9 196.4 L467.1 187.6 L458.2 196.4 L446.3 181.6 L440.4 169.8 L446.3 157.9 L458.2 140.1Z"/><path d="M437.4 172.7 L446.3 169.8 L455.2 184.6 L458.2 196.4 L446.3 199.4 L437.4 187.6Z"/><path d="M172.4 150.3 L182.2 144.8 L187.7 136.4 L194.7 130.9 L205.8 125.3 L211.3 129.5 L219.7 130.9 L225.2 135.1 L236.3 137.1 L250.2 137.8 L257.2 142.0 L257.1 143.5 L266.7 148.3 L276.3 150.7 L288.4 143.5 L300.4 138.7 L310.1 145.9 L319.7 143.5 L334.1 150.7 L341.4 148.3 L346.2 160.4 L358.2 157.9 L367.8 162.8 L377.5 153.1 L389.5 160.4 L399.1 145.9 L406.4 148.3 L406.4 162.8 L413.6 155.5 L411.2 143.5 L423.2 148.3 L432.9 165.2 L437.7 172.4 L440.1 186.8 L432.9 196.5 L423.2 198.9 L413.6 206.1 L411.2 220.6 L420.8 237.4 L442.5 247.0 L454.5 251.9 L459.3 268.7 L464.2 263.9 L471.4 244.6 L466.6 230.2 L469.0 206.1 L483.4 206.1 L495.5 218.1 L502.7 230.2 L512.3 220.6 L521.9 239.8 L531.6 251.9 L541.2 263.9 L538.8 283.2 L548.4 292.8 L548.4 289.8 L534.0 294.6 L526.8 299.4 L517.1 304.2 L503.9 301.8 L494.3 311.5 L493.1 316.3 L483.4 321.1 L476.2 328.3 L473.8 342.8 L466.6 350.0 L456.9 359.6 L455.7 366.8 L460.5 378.9 L456.9 383.7 L452.1 376.5 L447.3 366.8 L435.3 363.2 L423.2 365.6 L411.2 366.8 L401.6 380.1 L401.6 395.7 L406.4 405.4 L418.4 407.8 L425.6 400.6 L432.9 398.1 L435.3 405.4 L432.9 415.0 L444.9 422.2 L454.5 439.1 L466.6 436.7 L473.8 441.5 L469.0 453.5 L464.2 448.7 L456.9 443.9 L444.9 439.1 L440.1 431.9 L425.6 422.2 L406.4 417.4 L389.5 410.2 L377.5 403.0 L376.3 397.0 L373.0 387.0 L363.0 377.0 L356.3 367.0 L348.0 359.5 L345.5 361.2 L353.0 377.0 L361.3 390.3 L354.7 383.7 L346.3 373.7 L340.5 363.7 L334.7 353.7 L329.3 350.0 L319.7 335.5 L313.7 323.5 L312.5 304.2 L311.3 286.2 L310.1 280.2 L300.4 270.5 L288.4 256.1 L283.6 246.4 L293.2 263.9 L286.0 259.1 L293.2 249.4 L281.2 235.0 L271.5 220.6 L257.1 218.1 L262.7 217.0 L257.9 216.3 L250.2 218.4 L243.3 214.2 L237.7 212.8 L230.8 219.8 L222.4 222.6 L228.0 214.2 L229.4 208.7 L221.1 214.2 L214.1 222.6 L208.6 232.3 L200.2 242.0 L189.1 246.2 L178.0 253.1 L166.9 258.7 L157.2 264.2 L164.1 255.9 L178.0 248.9 L190.5 242.0 L200.2 230.9 L203.0 226.7 L194.7 228.1 L187.7 226.7 L186.3 217.0 L178.0 214.2 L173.8 207.3 L175.2 200.3 L180.8 194.8 L190.5 192.0 L190.5 185.1 L178.0 186.4 L172.4 183.7 L168.3 178.1 L175.2 171.2 L182.2 169.8 L186.3 172.6 L193.3 169.8 L186.3 165.6 L180.8 162.8 L173.8 155.9Z"/><path d="M529.2 273.5 L541.2 266.3 L548.4 278.3 L546.0 292.8 L534.0 292.8 L529.2 283.2Z"/><path d="M211.3 235.1 L218.3 229.5 L221.1 232.3 L216.9 237.8 L212.7 239.2Z"/><path d="M154.4 193.4 L159.9 192.7 L165.5 196.2 L162.7 197.6 L155.8 195.5Z"/><path d="M169.7 217.0 L173.8 215.6 L175.9 218.4 L172.4 219.8Z"/><path d="M456.9 392.1 L469.0 396.9 L476.2 401.8 L471.4 403.4 L459.3 398.1Z"/><path d="M484.6 403.4 L496.7 404.9 L495.5 409.0 L485.8 408.3Z"/><path d="M508.0 -3.0 L673.0 -3.0 L665.5 12.0 L660.5 24.5 L655.5 44.5 L665.5 54.5 L665.5 64.5 L658.0 67.0 L668.0 82.0 L665.5 92.0 L653.0 97.0 L648.0 109.5 L653.0 124.5 L653.0 137.0 L643.0 147.0 L628.0 157.0 L615.5 162.0 L608.0 172.0 L593.0 182.0 L588.0 197.0 L580.5 219.5 L570.5 212.0 L560.5 197.0 L555.5 184.5 L550.5 167.0 L548.0 147.0 L553.0 134.5 L543.0 119.5 L540.5 102.0 L535.5 87.0 L530.5 77.0 L518.0 69.5 L500.5 72.0 L493.0 62.0 L488.0 47.0 L490.5 34.5 L510.5 14.5Z"/><path d="M648.0 177.0 L658.0 174.5 L673.0 172.0 L680.5 182.0 L673.0 189.5 L660.5 194.5 L653.0 187.0Z"/><path d="M764.3 13.7 L778.8 12.5 L788.4 18.5 L790.8 6.4 L802.8 1.6 L814.9 4.0 L814.9 20.9 L810.1 23.3 L798.0 23.3 L800.4 40.2 L805.2 47.4 L798.0 49.8 L790.8 35.3 L781.2 61.8 L773.9 49.8 L764.3 28.1Z"/><path d="M899.1 124.4 L911.2 97.9 L913.6 81.1 L928.0 69.1 L954.5 59.4 L956.9 66.6 L944.9 73.9 L930.4 81.1 L923.2 88.3 L916.0 107.6 L913.6 122.0 L916.0 134.1 L906.4 134.1Z"/><path d="M1031.6 -0.8 L1043.6 -0.8 L1058.1 4.0 L1060.5 28.1 L1050.8 28.1 L1041.2 20.9 L1034.0 11.3Z"/><path d="M1065.3 23.3 L1074.9 30.5 L1074.9 37.8 L1062.9 42.6Z"/><path d="M882.3 -0.8 L894.3 -0.8 L889.5 6.4Z"/><path d="M916.0 -0.8 L932.9 -0.8 L925.6 6.4 L918.4 6.4Z"/><path d="M-4.8 507.6 L1.9 508.7 L6.3 516.4 L13.0 523.1 L15.2 534.2 L24.1 540.9 L33.0 552.0 L39.7 565.3 L39.7 578.7 L35.2 587.6 L28.6 596.4 L27.4 605.3 L19.7 607.6 L15.2 612.0 L6.3 609.8 L-4.8 609.8Z"/><path d="M-4.8 480.9 L6.3 483.1 L15.2 489.8 L19.7 496.4 L26.3 503.1 L19.7 503.1 L13.0 498.7 L6.3 496.4 L-4.8 498.7Z"/><path d="M23.0 489.8 L35.2 485.3 L33.0 490.9 L26.3 492.0Z"/><path d="M10.8 622.0 L21.9 620.9 L21.9 627.6 L17.4 632.0 L13.0 629.8Z"/><path d="M105.2 596.4 L108.6 598.7 L113.0 607.6 L121.9 608.7 L117.4 616.4 L115.2 620.9 L108.6 619.8 L108.6 609.8Z"/><path d="M101.9 620.9 L107.4 620.9 L106.3 627.6 L99.7 636.4 L90.8 645.3 L84.1 643.1 L86.3 636.4 L95.2 629.8Z"/><path d="M76.3 540.9 L81.9 543.1 L80.8 545.3 L76.3 543.1Z"/><path d="M46.7 250.1 L67.1 250.1 L59.7 259.4 L54.1 270.5 L48.6 270.5 L46.7 261.3Z"/><path d="M-1.4 263.1 L4.1 259.4 L6.0 270.5 L7.8 279.8 L4.1 294.6 L-1.4 292.7Z"/><path d="M-1.4 303.9 L4.1 304.8 L11.5 307.6 L7.8 313.1 L4.1 315.9 L-1.4 313.1Z"/><path d="M460.8 442.6 L471.9 437.0 L483.0 432.8 L499.7 435.6 L516.3 437.0 L530.2 448.1 L544.1 453.7 L555.2 462.0 L563.6 473.1 L577.4 475.9 L588.6 481.4 L605.2 487.0 L610.8 495.3 L605.2 509.2 L594.1 517.6 L594.1 534.2 L588.6 545.3 L571.9 553.7 L566.3 558.3 L558.9 571.3 L551.5 586.1 L544.1 593.5 L538.6 595.3 L538.6 602.7 L533.0 608.3 L520.0 613.9 L518.2 619.4 L512.6 623.1 L514.5 630.5 L507.1 634.2 L503.4 645.3 L508.9 652.7 L503.4 660.1 L497.8 667.6 L496.0 671.3 L499.7 678.7 L507.1 686.1 L514.5 688.9 L507.1 692.6 L499.7 695.3 L486.7 689.8 L479.3 682.4 L475.6 669.4 L474.7 652.7 L477.4 637.9 L480.2 623.1 L483.0 612.0 L487.6 589.8 L490.4 567.6 L492.3 549.0 L493.2 536.1 L495.0 529.6 L485.8 528.7 L474.7 517.6 L466.3 503.7 L458.0 487.0 L458.0 470.3 L466.3 456.4 L463.6 445.3Z"/><path d="M523.3 673.1 L533.0 670.3 L531.6 674.5 L524.7 675.9Z"/><path d="M1103.9 64.5 L1089.5 63.7 L1083.8 67.3 L1082.3 60.1 L1076.6 58.7 L1075.2 50.1 L1070.9 50.1 L1063.7 54.4 L1063.7 63.0 L1060.8 65.9 L1052.2 74.5 L1045.0 68.8 L1037.9 71.6 L1036.4 77.4 L1030.7 77.4 L1026.4 81.7 L1016.3 84.5 L1014.9 91.7 L1013.5 100.3 L1004.8 103.2 L996.2 103.2 L994.8 113.2 L1000.5 120.4 L989.1 116.1 L986.2 123.3 L981.9 129.0 L979.0 123.3 L976.1 120.4 L970.4 123.3 L967.5 126.2 L970.4 137.6 L970.4 152.0 L969.0 154.9 L967.5 152.0 L966.1 126.2 L969.0 113.2 L963.2 108.9 L956.1 111.8 L951.7 126.2 L950.3 143.4 L930.2 143.4 L921.6 134.8 L925.6 136.5 L923.2 146.1 L901.6 158.1 L889.5 148.5 L893.0 146.4 L886.3 153.1 L877.4 158.7 L871.9 170.9 L860.8 173.1 L860.8 184.2 L850.8 188.7 L844.1 179.8 L838.6 170.9 L844.1 169.8 L855.2 170.9 L863.0 168.7 L861.9 162.0 L853.0 155.3 L844.1 150.9 L836.3 147.6 L828.6 142.0 L824.1 136.4 L819.7 132.0 L815.2 133.1 L799.7 137.6 L788.6 145.3 L780.8 158.7 L771.9 174.2 L766.3 184.2 L759.7 190.9 L755.2 197.6 L743.0 206.4 L743.0 206.4 L744.1 213.1 L747.4 224.2 L753.0 229.8 L759.7 228.7 L765.2 230.9 L761.9 237.6 L755.2 238.7 L754.1 244.2 L755.2 250.9 L758.6 250.9 L749.7 259.8 L741.9 264.2 L738.6 269.8 L740.8 273.1 L735.2 272.0 L730.8 277.6 L721.9 279.8 L718.6 282.0 L711.9 284.2 L711.9 287.6 L719.7 290.9 L723.0 297.6 L724.1 306.4 L721.9 310.9 L711.9 309.8 L697.4 309.8 L696.3 329.8 L701.9 334.2 L707.4 340.9 L707.4 343.1 L704.9 347.6 L697.1 357.9 L689.3 365.7 L678.9 378.7 L671.1 396.8 L671.1 422.7 L678.9 435.7 L689.3 448.7 L702.3 456.4 L715.2 453.9 L730.8 451.3 L751.5 453.9 L759.3 459.0 L756.7 477.2 L761.9 482.4 L769.7 492.7 L772.3 510.9 L767.1 523.9 L769.7 539.4 L774.9 557.6 L782.6 575.7 L790.4 592.6 L806.0 591.3 L818.9 586.1 L829.3 575.7 L834.5 560.2 L844.9 552.4 L842.3 539.4 L850.0 529.0 L860.4 523.9 L860.4 513.5 L857.8 497.9 L860.4 485.0 L868.2 469.4 L881.2 459.0 L891.5 446.1 L896.7 433.1 L876.0 433.1 L870.8 425.3 L876.0 430.5 L886.3 422.7 L901.9 417.6 L917.5 409.8 L925.2 394.2 L930.8 390.9 L945.2 383.7 L954.8 386.1 L964.5 398.1 L969.3 405.3 L971.7 422.2 L978.9 434.2 L986.1 443.8 L983.2 442.4 L986.9 443.3 L989.7 439.6 L994.3 435.9 L994.3 419.2 L1001.7 413.7 L1008.2 405.3 L1016.5 403.5 L1016.5 397.0 L1028.6 394.2 L1033.2 396.1 L1034.1 399.8 L1040.6 405.3 L1040.6 413.7 L1039.7 415.5 L1043.4 417.4 L1048.9 415.5 L1054.5 422.0 L1054.5 431.3 L1056.3 436.8 L1053.6 442.4 L1061.0 448.9 L1061.9 453.5 L1061.0 457.2 L1065.6 461.8 L1073.0 466.4 L1073.0 464.6 L1071.1 460.0 L1071.1 455.3 L1070.2 450.7 L1064.7 446.1 L1061.0 442.4 L1058.2 436.8 L1061.9 426.6 L1069.3 430.3 L1070.2 435.0 L1075.8 436.8 L1078.6 440.5 L1090.6 431.3 L1091.5 421.1 L1086.9 415.5 L1083.2 412.7 L1078.6 405.3 L1084.1 398.9 L1093.4 397.0 L1102.6 396.1 L1102.6 94.2Z"/><path d="M891.5 513.5 L895.4 518.7 L891.5 539.4 L883.7 555.0 L876.0 560.2 L870.8 547.2 L873.4 529.0 L881.2 521.3Z"/><path d="M991.5 440.5 L997.1 441.4 L999.9 446.1 L998.0 449.8 L992.4 449.8Z"/><path d="M1044.3 453.5 L1051.7 454.4 L1053.6 457.2 L1060.0 460.9 L1061.9 464.6 L1071.1 467.4 L1073.0 473.9 L1079.5 492.4 L1065.6 492.4 L1056.3 478.5 L1050.8 462.7 L1045.2 457.2Z"/><path d="M1088.7 406.3 L1095.2 401.6 L1096.1 408.1 L1092.4 410.0Z"/><path d="M1090.6 464.6 L1102.6 460.9 L1102.6 492.4 L1089.7 492.4Z"/><path d="M700.8 250.9 L706.3 248.7 L710.8 253.1 L709.7 259.8 L704.1 262.0 L697.4 264.2 L694.1 259.8 L697.4 254.2Z"/><path d="M709.7 228.7 L715.2 224.2 L717.4 230.9 L720.8 235.3 L718.6 244.2 L723.0 250.9 L726.3 259.8 L731.9 263.1 L733.0 268.7 L728.6 273.1 L720.8 274.2 L713.0 276.4 L708.6 275.3 L715.2 270.9 L718.6 265.3 L713.0 264.2 L710.8 257.6 L713.0 253.1 L708.6 248.7 L709.7 243.1 L707.4 238.7 L709.7 234.2Z"/><path d="M-1.2 774.7 L10.5 777.6 L16.3 783.5 L30.9 786.4 L39.7 789.3 L51.3 796.6 L63.0 799.5 L71.7 805.3 L83.4 811.2 L95.1 822.8 L-1.2 822.8Z"/><path d="M474.2 822.8 L488.8 793.7 L497.6 779.1 L506.3 767.4 L518.0 755.7 L529.7 747.0 L539.9 744.1 L535.5 752.8 L526.7 764.5 L523.8 779.1 L526.7 822.8Z"/><path d="M474.2 808.2 L480.1 805.3 L478.6 814.1 L472.8 814.1Z"/><path d="M685.7 822.8 L693.0 808.2 L722.2 805.3 L728.0 801.0 L757.2 803.9 L774.7 798.0 L800.9 805.3 L827.2 796.6 L844.7 790.7 L856.3 798.0 L862.2 787.8 L882.6 779.1 L894.2 767.4 L914.7 768.9 L920.5 776.2 L938.0 780.5 L961.3 783.5 L975.9 792.2 L987.6 787.8 L1002.2 773.2 L1013.8 768.9 L1031.3 773.2 L1045.9 763.0 L1060.5 766.0 L1078.0 771.8 L1092.6 773.2 L1107.2 766.0 L1107.2 822.8Z"/></g>
<g fill="#d1d5da"><path d="M707.4 343.1 L709.7 339.8 L720.8 338.7 L725.2 334.2 L726.3 325.3 L734.1 316.4 L737.4 314.2 L748.6 308.7 L753.0 306.4 L764.1 313.1 L777.4 324.2 L780.8 329.8 L781.9 333.1 L784.1 327.6 L787.4 324.2 L785.2 320.9 L780.8 316.4 L775.2 310.9 L770.8 305.3 L768.6 300.9 L773.0 299.8 L780.8 308.7 L788.6 313.1 L790.8 320.9 L795.2 327.6 L798.6 334.2 L800.8 337.6 L805.2 334.2 L804.1 327.6 L807.4 324.2 L810.8 323.1 L815.2 327.6 L816.3 334.2 L819.7 339.8 L826.3 340.9 L835.2 342.0 L841.9 343.1 L843.0 347.6 L840.8 356.4 L840.8 360.9 L826.3 362.0 L815.2 359.8 L804.1 356.4 L795.2 354.2 L790.8 359.8 L788.6 364.2 L779.7 359.8 L770.8 356.4 L761.9 352.0 L759.7 348.7 L763.0 344.2 L761.9 338.7 L748.6 337.6 L735.2 340.9 L723.0 344.2 L713.0 345.3 L706.3 347.6Z"/><path d="M823.0 300.9 L828.6 296.4 L837.4 295.3 L846.3 302.0 L853.0 305.3 L853.0 315.3 L840.8 316.4 L826.3 317.6 L819.7 315.3 L823.0 309.8Z"/><path d="M785.2 213.1 L789.7 218.7 L786.3 226.4 L784.1 235.3 L779.7 242.0 L777.4 248.7 L770.8 249.8 L773.0 253.1 L775.2 255.3 L786.3 250.9 L798.6 248.7 L798.6 240.9 L799.7 234.2 L805.2 223.1 L804.1 218.7 L813.0 217.6 L820.8 215.3 L830.8 202.0 L797.4 202.0 L798.6 208.7 L799.7 216.4 L797.4 219.8Z"/><path d="M765.2 230.9 L769.7 230.9 L770.8 246.4 L768.6 249.8 L761.9 250.9 L759.7 244.2 L761.9 237.6Z"/><path d="M799.7 177.6 L809.7 177.6 L810.8 180.9 L804.1 188.7 L798.6 195.3 L797.4 199.8 L798.6 213.1 L800.8 218.7 L810.8 217.6 L825.2 218.7 L826.3 220.9 L819.7 222.0 L817.4 223.1 L806.3 224.2 L800.8 226.4 L799.7 233.1 L796.3 242.0 L781.9 242.0 L784.1 228.7 L788.6 219.8 L784.1 210.9 L786.3 199.8 L796.3 193.1 L801.9 186.4Z"/><path d="M819.7 312.0 L826.3 305.3 L836.3 302.0 L839.7 298.7 L848.0 298.7 L856.3 303.7 L864.7 312.0 L861.3 317.0 L848.0 314.5 L833.0 316.2 L821.3 318.7Z"/><path d="M886.3 300.3 L894.7 295.3 L903.0 298.7 L899.7 308.7 L906.3 318.7 L906.3 332.0 L901.3 338.7 L894.7 332.0 L888.0 322.0 L888.0 312.0Z"/><path d="M887.4 366.8 L892.3 365.6 L901.9 378.8 L916.3 386.1 L928.4 388.5 L935.6 386.1 L930.8 390.9 L921.1 398.1 L916.3 395.7 L909.1 390.9 L899.5 388.5 L892.3 381.3Z"/><path d="M837.1 368.3 L844.9 369.6 L857.8 391.6 L868.2 409.8 L874.7 427.9 L872.9 432.6 L865.6 422.7 L855.2 407.2 L844.9 386.4Z"/><path d="M314.9 172.4 L324.5 167.6 L334.1 174.8 L331.7 184.4 L319.7 183.2Z"/><path d="M340.2 208.5 L358.2 201.3 L360.6 206.1 L348.6 213.3Z"/><path d="M391.9 259.1 L399.1 256.7 L405.2 271.1 L401.6 273.5Z"/><path d="M833.2 473.3 L839.7 470.7 L841.0 475.9 L835.8 478.5Z"/><path d="M446.3 140.1 L467.1 146.1 L476.0 157.9 L478.9 169.8 L487.8 181.6 L481.9 196.4 L467.1 199.4 L458.2 196.4 L446.3 181.6 L440.4 169.8 L446.3 157.9Z"/></g>
<g fill="#f4f4f2"><path d="M755.2 314.2 L758.6 310.9 L759.7 316.4 L756.9 318.7Z"/><path d="M755.2 322.0 L758.6 322.0 L758.6 328.7 L755.8 328.7Z"/><path d="M769.7 335.3 L775.2 334.2 L777.4 338.7 L771.9 338.7Z"/><path d="M804.1 344.2 L810.8 343.1 L810.8 345.3 L804.1 345.9Z"/><path d="M829.7 349.8 L835.2 348.7 L834.1 352.0Z"/></g>
<g fill="#faf5d8" stroke="#77776e" stroke-width="1.2" stroke-linejoin="round">
<path d="M311.3 286.2 L318.5 282.6 L411.2 281.4 L412.4 283.8 L432.9 286.2 L442.5 292.2 L450.9 300.6 L453.3 311.5 L450.9 316.3 L460.5 313.9 L464.2 309.1 L476.2 303.0 L485.8 300.6 L494.3 291.0 L500.3 292.2 L503.9 301.8 L494.3 311.5 L493.1 316.3 L483.4 321.1 L476.2 328.3 L473.8 342.8 L466.6 350.0 L456.9 359.6 L455.7 366.8 L460.5 378.9 L456.9 383.7 L452.1 376.5 L447.3 366.8 L435.3 363.2 L423.2 365.6 L411.2 366.8 L401.6 380.1 L396.7 376.5 L389.5 366.8 L377.5 358.4 L367.8 358.4 L355.8 358.4 L338.9 354.8 L329.3 350.0 L319.7 335.5 L313.7 323.5 L312.5 304.2Z"/><path d="M205.8 125.3 L211.3 129.5 L219.7 130.9 L225.2 135.1 L236.3 137.1 L250.2 137.8 L257.2 142.0 L257.9 216.3 L262.7 217.0 L269.7 225.3 L275.2 220.5 L280.8 228.1 L286.3 237.8 L294.0 243.4 L293.3 250.3 L286.3 250.3 L278.0 239.2 L271.1 228.1 L261.3 219.8 L250.2 218.4 L243.3 214.2 L237.7 212.8 L230.8 219.8 L222.4 222.6 L228.0 214.2 L229.4 208.7 L221.1 214.2 L214.1 222.6 L208.6 232.3 L200.2 242.0 L189.1 246.2 L178.0 253.1 L166.9 258.7 L157.2 264.2 L164.1 255.9 L178.0 248.9 L190.5 242.0 L200.2 230.9 L203.0 226.7 L194.7 228.1 L187.7 226.7 L186.3 217.0 L178.0 214.2 L173.8 207.3 L175.2 200.3 L180.8 194.8 L190.5 192.0 L190.5 185.1 L178.0 186.4 L172.4 183.7 L168.3 178.1 L175.2 171.2 L182.2 169.8 L186.3 172.6 L193.3 169.8 L186.3 165.6 L180.8 162.8 L173.8 155.9 L172.4 150.3 L182.2 144.8 L187.7 136.4 L194.7 130.9Z"/><path d="M211.3 235.1 L218.3 229.5 L221.1 232.3 L216.9 237.8 L212.7 239.2Z"/><path d="M502.4 549.0 L505.2 545.3 L518.2 545.3 L533.0 556.4 L534.9 563.9 L544.1 558.3 L548.7 561.1 L544.1 567.6 L536.7 573.1 L533.0 582.4 L533.0 593.5 L538.6 602.7 L533.0 608.3 L520.0 613.9 L518.2 619.4 L512.6 623.1 L514.5 630.5 L507.1 634.2 L503.4 645.3 L508.9 652.7 L503.4 660.1 L497.8 667.6 L496.0 671.3 L499.7 678.7 L507.1 686.1 L514.5 688.9 L507.1 692.6 L496.9 687.9 L497.8 675.0 L496.0 671.3 L486.7 663.9 L484.9 652.7 L486.7 637.9 L488.6 623.1 L490.4 604.6 L494.1 589.8 L496.0 573.1 L498.7 560.1Z"/><path d="M495.0 529.6 L493.2 536.1 L492.3 549.0 L490.4 567.6 L487.6 589.8 L483.0 612.0 L480.2 623.1 L477.4 637.9 L474.7 652.7 L475.6 669.4 L479.3 682.4 L486.7 689.8 L499.7 695.3 L507.1 692.6 L496.9 687.9 L497.8 675.0 L496.0 671.3 L486.7 663.9 L484.9 652.7 L486.7 637.9 L488.6 623.1 L490.4 604.6 L494.1 589.8 L496.0 573.1 L498.7 560.1 L502.4 549.0 L498.7 536.1Z"/><path d="M741.2 424.0 L751.5 425.3 L761.9 424.0 L774.9 425.3 L776.2 430.5 L769.7 440.9 L764.5 448.7 L756.7 451.3 L748.9 455.2 L743.7 452.6 L741.2 448.7 L736.0 446.1 L736.0 435.7Z"/><path d="M844.1 347.6 L848.6 346.4 L847.4 352.0 L844.1 360.9 L843.0 366.4 L841.3 360.9Z"/><path d="M899.5 387.3 L909.1 383.7 L913.9 381.3 L915.1 386.1 L909.1 392.1 L901.9 390.9Z"/><path d="M912.7 301.8 L923.6 299.4 L933.2 306.6 L945.2 309.0 L954.8 316.3 L957.3 321.1 L964.5 316.3 L969.3 321.1 L964.5 323.5 L957.3 323.5 L954.8 328.3 L950.0 335.5 L942.8 330.7 L933.2 321.1 L923.6 313.8 L916.3 316.3 L912.7 309.0Z"/><path d="M709.7 228.7 L715.2 224.2 L717.4 230.9 L720.8 235.3 L718.6 244.2 L723.0 250.9 L726.3 259.8 L731.9 263.1 L733.0 268.7 L728.6 273.1 L720.8 274.2 L713.0 276.4 L708.6 275.3 L715.2 270.9 L718.6 265.3 L713.0 264.2 L710.8 257.6 L713.0 253.1 L708.6 248.7 L709.7 243.1 L707.4 238.7 L709.7 234.2Z"/><path d="M711.9 284.2 L718.6 282.0 L721.9 279.8 L730.8 277.6 L735.2 272.0 L741.9 275.3 L748.6 279.8 L753.0 284.2 L750.8 290.9 L748.6 294.2 L749.7 302.0 L751.9 308.7 L744.1 312.0 L735.2 313.1 L729.7 309.8 L724.1 306.4 L723.0 297.6 L719.7 290.9 L711.9 287.6Z"/><path d="M738.6 269.8 L741.9 264.2 L747.4 259.8 L749.7 259.8 L747.4 268.7 L745.2 273.1Z"/><path d="M749.7 259.8 L755.2 252.0 L758.6 250.9 L764.1 254.2 L770.8 253.1 L774.1 256.4 L775.2 266.4 L777.4 273.1 L769.7 275.3 L768.6 279.8 L773.0 282.0 L770.8 288.7 L764.1 289.8 L753.0 289.8 L753.0 284.2 L748.6 279.8 L747.4 273.1Z"/><path d="M775.2 255.3 L786.3 250.9 L793.0 252.0 L804.1 253.1 L806.3 259.8 L805.2 268.7 L807.4 278.7 L799.7 279.8 L790.8 280.9 L787.4 278.7 L781.9 275.3 L777.4 272.0 L775.2 264.2Z"/><path d="M768.6 275.3 L777.4 273.1 L784.1 275.3 L790.8 280.9 L786.3 283.1 L777.4 284.2 L770.8 282.0Z"/><path d="M798.6 242.0 L804.1 240.9 L810.8 243.1 L815.2 246.4 L813.0 254.2 L807.4 255.3 L804.1 250.9 L798.6 248.7Z"/><path d="M799.7 234.2 L804.1 232.0 L810.8 234.2 L817.4 235.3 L819.7 242.0 L815.2 245.3 L810.8 243.1 L804.1 240.9 L798.6 240.9Z"/><path d="M805.2 223.1 L813.0 222.0 L819.7 223.1 L819.7 232.0 L817.4 235.3 L810.8 234.2 L805.2 230.9Z"/><path d="M807.4 255.3 L813.0 254.2 L816.3 245.3 L824.1 244.2 L829.7 248.7 L834.1 256.4 L835.2 260.9 L829.7 266.4 L816.3 267.6 L807.4 268.7 L806.3 259.8Z"/><path d="M781.9 290.9 L788.6 286.4 L797.4 284.2 L801.9 286.4 L799.7 293.1 L796.3 295.3 L790.8 296.4 L784.1 295.3Z"/><path d="M771.9 299.8 L777.4 298.7 L784.1 296.4 L789.7 299.8 L788.6 302.0 L781.9 303.1 L784.1 308.7 L787.4 313.1 L781.9 312.0 L778.6 306.4Z"/><path d="M797.4 288.7 L803.0 286.4 L813.0 286.4 L817.4 287.6 L821.9 293.1 L823.0 299.8 L819.7 305.3 L813.0 306.4 L804.1 306.4 L799.7 300.9 L798.6 295.3Z"/><path d="M817.4 286.4 L821.9 286.4 L826.3 294.2 L824.1 298.7 L821.9 293.1Z"/><path d="M801.9 307.6 L810.8 306.4 L819.7 307.6 L820.8 315.3 L815.2 318.7 L804.1 317.6Z"/><path d="M787.4 233.1 L790.8 232.0 L789.7 237.6 L787.4 237.6Z"/><path d="M797.4 145.9 L804.1 154.2 L806.3 174.2 L810.8 179.8 L808.6 182.0 L801.9 188.7 L796.3 193.1 L786.3 199.8 L784.1 210.9 L786.3 219.8 L781.9 228.7 L780.8 237.6 L777.4 246.4 L770.8 247.6 L766.3 239.8 L764.1 226.4 L767.4 217.6 L766.3 199.8 L766.3 193.1 L771.9 188.7 L775.2 174.2 L781.9 157.6 L787.4 153.1 L794.1 148.7Z"/><path d="M816.3 139.8 L819.7 138.1 L825.2 143.1 L825.2 157.6 L826.3 166.4 L827.4 177.6 L829.7 188.7 L831.9 199.8 L828.6 206.4 L820.8 213.1 L813.0 217.6 L805.2 218.7 L799.7 217.6 L797.4 213.1 L798.6 199.8 L797.4 195.3 L799.7 193.1 L804.1 188.7 L809.7 183.1 L810.8 179.8 L806.3 174.2 L804.1 154.2 L809.7 150.9 L814.1 147.6Z"/><path d="M814.7 320.3 L823.0 318.7 L833.0 317.0 L843.0 315.3 L856.3 314.5 L864.7 317.0 L873.0 318.7 L878.0 325.3 L876.3 335.3 L866.3 336.2 L856.3 337.0 L848.0 340.3 L836.3 340.3 L828.0 338.7 L819.7 338.7 L816.3 332.0 L814.7 325.3Z"/><path d="M859.7 310.3 L866.3 308.7 L879.7 312.0 L881.3 315.3 L873.0 318.7 L864.7 315.3Z"/><path d="M873.0 320.3 L878.0 318.7 L881.3 327.0 L878.0 328.7Z"/><path d="M878.0 318.7 L886.3 317.0 L893.0 322.0 L888.0 327.0 L881.3 327.0Z"/>
</g>
<path fill="#ae8b78" stroke="#6e655d" stroke-width="1.5" d="M804.1 279.8 L807.4 268.7 L816.3 267.6 L829.7 266.4 L837.4 265.3 L846.3 266.4 L853.0 268.7 L857.4 273.1 L861.9 279.8 L859.7 286.4 L853.0 290.9 L847.4 299.8 L839.7 304.2 L837.4 299.8 L831.9 295.3 L824.1 297.6 L821.9 288.7 L817.4 286.4 L813.0 286.4 L803.0 286.4Z"/>
</svg>
<div class="a" style="left:813px;top:1051px;width:66px;height:11px;border:1.5px solid #404040;border-top:none"></div>
<div class="a" style="left:819.00px;top:1046.73px;font-size:15.55px;font-weight:bold;color:#404040;transform:scaleX(0.8546);transform-origin:0 0;">2000 km</div>
<div class="a" style="left:1678.00px;top:1043.18px;font-size:17.15px;color:#404040;transform:scaleX(0.9492);transform-origin:0 0;">© OpenStreetMap contributors</div>
<div class="a" style="left:1694px;top:1058.5px;width:205px;height:1px;background:#404040"></div>

<svg class="a" style="left:807px;top:248px" width="1101" height="820" viewBox="807 248 1101 820">
<g fill="#ede8cc"><path d="M1228 539 l14 -1 l8 4 l-10 1z"/><path d="M1243 547 l4 0 l1 10 l-3 6 l-2 -6z"/></g>
<g fill="none" stroke="#85857c" stroke-width="1.6" stroke-linecap="round">
<path d="M964 512 L955 515 L946 516.5 L937 518.5" stroke-dasharray="3 1.5"/>
<path d="M1072 468 L1082 474 L1090 482 L1097 490" stroke-width="2.4" opacity="0.8"/>
<path d="M1289 868 L1286 886 L1285 900 L1286 916 L1290 928 L1297 935 L1306 940" stroke-width="2.6" opacity="0.85"/><path d="M1292 912 L1294 925 L1301 934" stroke-width="1.5" opacity="0.7"/>
</g>
<g fill="#faf5d8" stroke="#77776e" stroke-width="1">
<path d="M999 642.5 l3 1 l-1 1.5z"/><path d="M1005 645 l4 0.5 l0 2 l-3 -0.5z"/><path d="M1014 649 l3 1 l0.5 3 l-3 -1z"/>
</g>
</svg>

</body></html>
